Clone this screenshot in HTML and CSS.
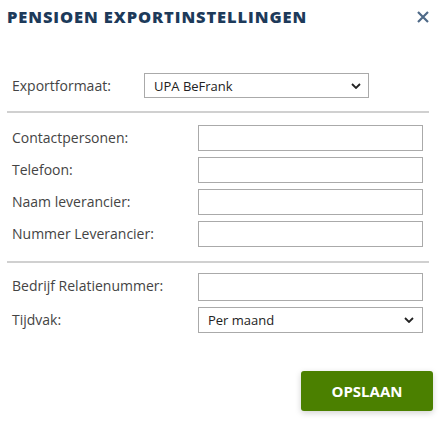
FILE: index.html
```html
<!DOCTYPE html>
<html>
<head>
<meta charset="utf-8">
<link rel="stylesheet" href="styles.css">
</head>
<body>
<div class="dialog">
  <div class="header">
    <h1 class="title">PENSIOEN EXPORTINSTELLINGEN</h1>
    <span class="close">
      <svg width="12" height="12" viewBox="0 0 12 12"><path d="M1 1L11 11M11 1L1 11" stroke="#4f6a88" stroke-width="2.2" fill="none"/></svg>
    </span>
  </div>

  <div class="export-row">
    <label class="label">Exportformaat:</label>
    <div class="select select-export">
      <span>UPA BeFrank</span>
      <svg class="chev" width="10" height="6" viewBox="0 0 10 6"><path d="M1 1L5 5L9 1" stroke="#222" stroke-width="1.8" fill="none"/></svg>
    </div>
  </div>
  <hr class="sep">

  <div class="fields">
    <div class="row"><label class="label">Contactpersonen:</label><div class="input"></div></div>
    <div class="row"><label class="label">Telefoon:</label><div class="input"></div></div>
    <div class="row"><label class="label">Naam leverancier:</label><div class="input"></div></div>
    <div class="row"><label class="label">Nummer Leverancier:</label><div class="input"></div></div>
  </div>
  <hr class="sep sep2">

  <div class="fields fields2">
    <div class="row"><label class="label">Bedrijf Relatienummer:</label><div class="input input-tall"></div></div>
    <div class="row"><label class="label">Tijdvak:</label>
      <div class="input select select-tijd">
        <span>Per maand</span>
        <svg class="chev" width="10" height="6" viewBox="0 0 10 6"><path d="M1 1L5 5L9 1" stroke="#222" stroke-width="1.8" fill="none"/></svg>
      </div>
    </div>
  </div>

  <div class="footer">
    <button class="btn">OPSLAAN</button>
  </div>
</div>
</body>
</html>
```

FILE: styles.css
```css
* { box-sizing: border-box; }
html, body { margin: 0; padding: 0; background: #fff; }
body { font-family: "Open Sans", "Noto Sans", sans-serif; color: #333; }

.dialog { width: 440px; height: 424px; padding: 0 9px 0 7px; }

.header { display: flex; justify-content: space-between; align-items: center; height: 32px; padding-top: 1px; }
.title {
  margin: 0; font-size: 16.5px; font-weight: 800; color: #1d3a5a;
  letter-spacing: 0.9px; line-height: 20px;
}
.close { display: flex; margin-right: 2px; }

.export-row { display: flex; align-items: center; margin-top: 41px; height: 25px; }
.label { font-size: 14px; font-weight: 400; line-height: 18px; color: #444; padding-left: 5px; }
.export-row .label { width: 137px; }

.select { display: flex; align-items: center; justify-content: space-between; border: 1px solid #aaa; font-size: 13px; color: #222; }
.select-export { width: 225px; height: 25px; padding: 0 7px 0 9px; }

.sep { border: 0; height: 2px; background: #d0d0d0; margin: 13px 2px 0 0; }

.fields { display: flex; flex-direction: column; gap: 6px; margin-top: 12px; margin-right: 8px; }
.row { display: flex; justify-content: space-between; align-items: flex-start; }
.row .label { padding-top: 4px; }
.input { width: 225px; height: 26px; border: 1px solid #aaa; }

.sep2 { margin-top: 14px; }
.fields2 { margin-top: 10px; gap: 6px; }
.input-tall { height: 28px; }
.select-tijd { padding: 0 8px 0 9px; }

.footer { display: flex; justify-content: flex-end; margin-top: 38px; }
.btn {
  width: 132px; height: 40px; border: 0; border-radius: 3px; background: #4b8000;
  color: #fff; font-family: "Open Sans", sans-serif; font-weight: 700; font-size: 15px;
  box-shadow: 0 2px 6px rgba(0,0,0,0.18); margin-right: -2px;
}
```
